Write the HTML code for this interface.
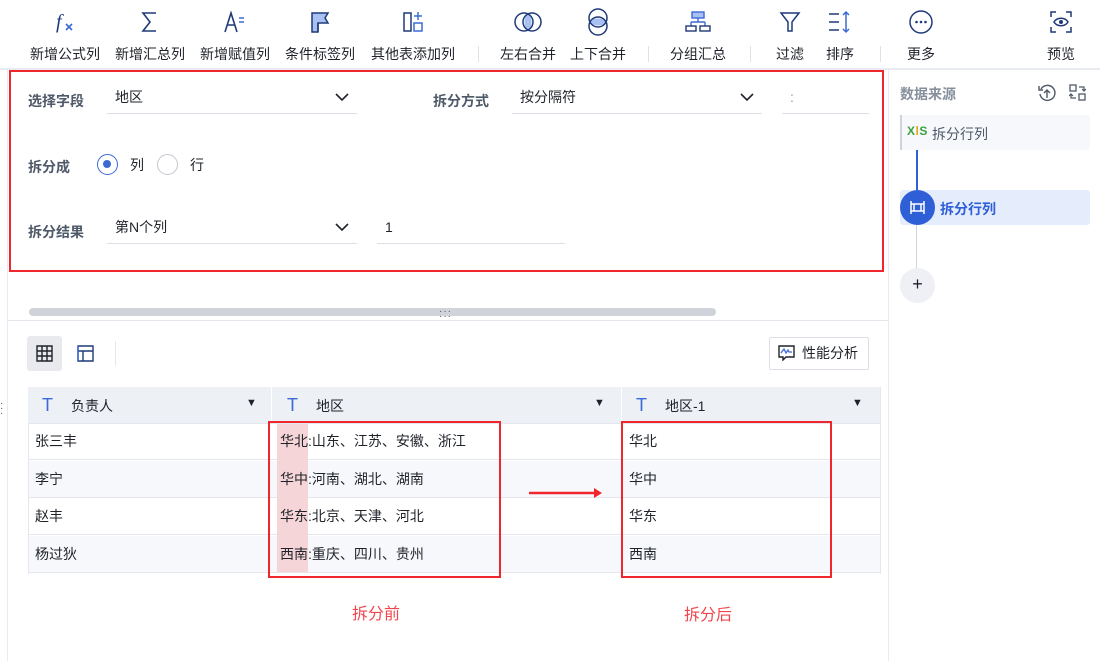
<!DOCTYPE html>
<html><head><meta charset="utf-8"><style>
*{margin:0;padding:0;box-sizing:border-box}
body{width:1100px;height:661px;background:#fff;font-family:"Liberation Sans","Noto Sans CJK SC",sans-serif;color:#1f2329;position:relative;overflow:hidden;font-size:14px}
.a{position:absolute}
.tb{position:absolute;top:0;text-align:center;font-size:14px;color:#1f2329}
.tb svg{display:block;margin:0 auto}
.tb span{position:absolute;top:44px;left:50%;transform:translateX(-50%);white-space:nowrap}
.sep{position:absolute;top:46px;width:1px;height:16px;background:#dfe1e5}
.lbl{position:absolute;font-size:14px;color:#4e5969;font-weight:bold}
.sel{position:absolute;border-bottom:1px solid #dcdfe6;height:30px;font-size:14px;padding-left:8px;line-height:26px}
.chev{position:absolute;right:8px;top:8px}
.th{position:absolute;top:387px;height:36px;background:#edf0f5;line-height:36px;font-size:14px}
.cell{position:absolute;font-size:14px;line-height:37px;padding-left:8px}
.row{position:absolute;left:28px;width:852px;height:37px;border-bottom:1px solid #e4e7ee}
</style></head><body>
<!-- toolbar -->
<div class="tb" style="left:28px;width:74px"><svg width="24" height="24" viewBox="0 0 24 24" style="margin-top:10px"><text x="3" y="18" font-family="Liberation Serif" font-style="italic" font-size="20" fill="#1f3a78">f</text><path d="M13 14l6 6M19 14l-6 6" stroke="#3b6ad6" stroke-width="1.6"/></svg><span>新增公式列</span></div>
<div class="tb" style="left:113px;width:74px"><svg width="24" height="24" viewBox="0 0 24 24" style="margin-top:10px"><path d="M18 3H5l7 9-7 9h13" fill="none" stroke="#1f3a78" stroke-width="1.6"/></svg><span>新增汇总列</span></div>
<div class="tb" style="left:198px;width:74px"><svg width="24" height="24" viewBox="0 0 24 24" style="margin-top:10px"><path d="M2 22L8 3l6 19M4.5 15h7" fill="none" stroke="#1f3a78" stroke-width="1.6"/><path d="M16 8h5M16 12h5" stroke="#3b6ad6" stroke-width="1.4"/></svg><span>新增赋值列</span></div>
<div class="tb" style="left:283px;width:74px"><svg width="24" height="24" viewBox="0 0 24 24" style="margin-top:10px"><path d="M4 3h16l-3 5 3 5H10v9H4z" fill="#a9c1f2" stroke="#1f3a78" stroke-width="1.5"/><path d="M10 13v9" stroke="#1f3a78" stroke-width="1.5"/></svg><span>条件标签列</span></div>
<div class="tb" style="left:368px;width:90px"><svg width="24" height="24" viewBox="0 0 24 24" style="margin-top:10px"><rect x="3" y="3" width="7" height="18" fill="none" stroke="#1f3a78" stroke-width="1.5"/><rect x="13" y="13" width="8" height="8" fill="none" stroke="#3b6ad6" stroke-width="1.5"/><path d="M17 2v8M13 6h8" stroke="#3b6ad6" stroke-width="1.5"/></svg><span>其他表添加列</span></div>
<div class="sep" style="left:478px"></div>
<div class="tb" style="left:498px;width:60px"><svg width="30" height="24" viewBox="0 0 30 24" style="margin-top:10px"><ellipse cx="15" cy="12" rx="3.5" ry="8" fill="#a9c1f2"/><circle cx="11" cy="12" r="9" fill="none" stroke="#1f3a78" stroke-width="1.5"/><circle cx="19" cy="12" r="9" fill="none" stroke="#1f3a78" stroke-width="1.5"/></svg><span>左右合并</span></div>
<div class="tb" style="left:568px;width:60px"><svg width="24" height="30" viewBox="0 0 24 30" style="margin-top:7px"><ellipse cx="12" cy="15" rx="8" ry="3.5" fill="#a9c1f2"/><circle cx="12" cy="11" r="9" fill="none" stroke="#1f3a78" stroke-width="1.5"/><circle cx="12" cy="19" r="9" fill="none" stroke="#1f3a78" stroke-width="1.5"/></svg><span>上下合并</span></div>
<div class="sep" style="left:648px"></div>
<div class="tb" style="left:668px;width:60px"><svg width="26" height="24" viewBox="0 0 26 24" style="margin-top:10px"><rect x="7" y="2" width="12" height="6" fill="#a9c1f2" stroke="#3b6ad6" stroke-width="1.4"/><path d="M13 8v4M6 12h14M6 12v4M20 12v4" stroke="#3b6ad6" stroke-width="1.4" fill="none"/><rect x="1" y="16" width="10" height="5" fill="none" stroke="#1f3a78" stroke-width="1.4"/><rect x="15" y="16" width="10" height="5" fill="none" stroke="#1f3a78" stroke-width="1.4"/></svg><span>分组汇总</span></div>
<div class="sep" style="left:750px"></div>
<div class="tb" style="left:770px;width:40px"><svg width="24" height="24" viewBox="0 0 24 24" style="margin-top:10px"><path d="M3 3h18l-7 9v9h-4v-9z" fill="none" stroke="#1f3a78" stroke-width="1.5"/></svg><span>过滤</span></div>
<div class="tb" style="left:820px;width:40px"><svg width="26" height="24" viewBox="0 0 26 24" style="margin-top:10px"><path d="M2 4h10M2 12h10M2 20h10" stroke="#1f3a78" stroke-width="1.5"/><path d="M19 2v20M16 5l3-3 3 3M16 19l3 3 3-3" stroke="#3b6ad6" stroke-width="1.5" fill="none"/></svg><span>排序</span></div>
<div class="sep" style="left:880px"></div>
<div class="tb" style="left:901px;width:40px"><svg width="26" height="26" viewBox="0 0 26 26" style="margin-top:9px"><circle cx="13" cy="13" r="11" fill="none" stroke="#1f3a78" stroke-width="1.5"/><circle cx="8.5" cy="13" r="1.3" fill="#1f3a78"/><circle cx="13" cy="13" r="1.3" fill="#1f3a78"/><circle cx="17.5" cy="13" r="1.3" fill="#1f3a78"/></svg><span>更多</span></div>
<div class="tb" style="left:1041px;width:40px"><svg width="24" height="24" viewBox="0 0 24 24" style="margin-top:10px"><path d="M2 7V2h5M17 2h5v5M22 17v5h-5M7 22H2v-5" fill="none" stroke="#1f3a78" stroke-width="1.5"/><path d="M5 12c3-5 11-5 14 0-3 5-11 5-14 0z" fill="none" stroke="#1f3a78" stroke-width="1.5"/><circle cx="12" cy="12" r="2" fill="#1f3a78"/></svg><span>预览</span></div>
<div class="a" style="left:0;top:68px;width:1100px;height:2px;background:#e8ebf0"></div>
<div class="a" style="left:7px;top:70px;width:1px;height:591px;background:#e8ebf0"></div>
<div class="a" style="left:888px;top:70px;width:1px;height:591px;background:#e8ebf0"></div>

<!-- config box -->
<div class="a" style="left:9px;top:70px;width:875px;height:202px;border:2px solid #f0262e"></div>
<div class="lbl" style="left:28px;top:91px">选择字段</div>
<div class="sel" style="left:107px;top:84px;width:250px">地区<svg class="chev" width="14" height="10" viewBox="0 0 14 10"><path d="M1 2l6 6 6-6" fill="none" stroke="#1f2329" stroke-width="1.6"/></svg></div>
<div class="lbl" style="left:433px;top:91px">拆分方式</div>
<div class="sel" style="left:512px;top:84px;width:250px">按分隔符<svg class="chev" width="14" height="10" viewBox="0 0 14 10"><path d="M1 2l6 6 6-6" fill="none" stroke="#1f2329" stroke-width="1.6"/></svg></div>
<div class="sel" style="left:782px;top:84px;width:87px;color:#999">:</div>
<div class="lbl" style="left:28px;top:157px">拆分成</div>
<div class="a" style="left:97px;top:154px;width:21px;height:21px;border:1.5px solid #3b6ad6;border-radius:50%"><div style="position:absolute;left:5px;top:5px;width:8px;height:8px;border-radius:50%;background:#3b6ad6"></div></div>
<div class="a" style="left:130px;top:155px">列</div>
<div class="a" style="left:157px;top:154px;width:21px;height:21px;border:1.5px solid #c3c7cf;border-radius:50%"></div>
<div class="a" style="left:190px;top:155px">行</div>
<div class="lbl" style="left:28px;top:222px">拆分结果</div>
<div class="sel" style="left:107px;top:214px;width:250px">第N个列<svg class="chev" width="14" height="10" viewBox="0 0 14 10"><path d="M1 2l6 6 6-6" fill="none" stroke="#1f2329" stroke-width="1.6"/></svg></div>
<div class="sel" style="left:377px;top:214px;width:188px">1</div>

<!-- scrollbar & divider -->
<div class="a" style="left:29px;top:308px;width:687px;height:8px;border-radius:4px;background:#d0d3da"></div>
<div class="a" style="left:8px;top:320px;width:880px;height:1px;background:#e4e7ee"></div>
<div class="a" style="left:439px;top:309px;font-size:10px;color:#555;letter-spacing:1px;line-height:5px">···<br>···</div>
<div class="a" style="left:0;top:401px;font-size:10px;line-height:5px;color:#555">·<br>·<br>·</div>

<!-- view toggles -->
<div class="a" style="left:27px;top:336px;width:35px;height:35px;background:#e8eaee;border-radius:3px"></div>
<svg class="a" style="left:36px;top:345px" width="17" height="17" viewBox="0 0 17 17"><path d="M1 1h15v15H1zM6 1v15M11 1v15M1 6h15M1 11h15" fill="none" stroke="#1f2329" stroke-width="1.4"/></svg>
<svg class="a" style="left:77px;top:345px" width="17" height="17" viewBox="0 0 17 17"><path d="M1 1h15v15H1zM1 6h15M6 6v10" fill="none" stroke="#1f3a78" stroke-width="1.4"/><path d="M1 1v15" stroke="#3b6ad6" stroke-width="1.4"/></svg>
<div class="a" style="left:115px;top:341px;width:1px;height:25px;background:#e4e7ee"></div>
<div class="a" style="left:769px;top:337px;width:100px;height:33px;border:1px solid #dcdfe6;border-radius:2px;font-size:14px;line-height:31px;padding-left:32px">性能分析</div>
<svg class="a" style="left:778px;top:345px" width="17" height="16" viewBox="0 0 17 16"><path d="M1 1h15v11H8l-3 3v-3H1z" fill="none" stroke="#1f2329" stroke-width="1.4"/><path d="M3 8l3-4 2 4 2-3 1 2h3" fill="none" stroke="#3b6ad6" stroke-width="1.3"/></svg>

<!-- table -->
<div class="th" style="left:28px;width:243px"></div>
<div class="th" style="left:272px;width:349px"></div>
<div class="th" style="left:622px;width:258px"></div>
<div class="row" style="top:423px;background:#fff"></div>
<div class="row" style="top:461px;background:#f7f8fc"></div>
<div class="row" style="top:498px;background:#fff"></div>
<div class="row" style="top:536px;background:#f7f8fc"></div>
<div class="a" style="left:28px;top:423px;width:1px;height:151px;background:#e4e7ee"></div>
<div class="a" style="left:880px;top:387px;width:1px;height:187px;background:#e4e7ee"></div>
<div class="a" style="left:28px;top:423px;width:852px;height:1px;background:#e4e7ee"></div>
<div class="a" style="left:277px;top:424px;width:31px;height:148px;background:#f6d5d8"></div>
<div class="a" style="left:42px;top:396px;color:#3b6ad6;font-size:18px;line-height:18px">T</div>
<div class="a" style="left:71px;top:396px">负责人</div>
<div class="a" style="left:246px;top:397px;font-size:11px">▼</div>
<div class="a" style="left:287px;top:396px;color:#3b6ad6;font-size:18px;line-height:18px">T</div>
<div class="a" style="left:316px;top:396px">地区</div>
<div class="a" style="left:594px;top:397px;font-size:11px">▼</div>
<div class="a" style="left:636px;top:396px;color:#3b6ad6;font-size:18px;line-height:18px">T</div>
<div class="a" style="left:665px;top:396px">地区-1</div>
<div class="a" style="left:852px;top:397px;font-size:11px">▼</div>
<div class="cell" style="left:27px;top:423px">张三丰</div>
<div class="cell" style="left:27px;top:461px">李宁</div>
<div class="cell" style="left:27px;top:498px">赵丰</div>
<div class="cell" style="left:27px;top:536px">杨过狄</div>
<div class="cell" style="left:272px;top:423px">华北:山东、江苏、安徽、浙江</div>
<div class="cell" style="left:272px;top:461px">华中:河南、湖北、湖南</div>
<div class="cell" style="left:272px;top:498px">华东:北京、天津、河北</div>
<div class="cell" style="left:272px;top:536px">西南:重庆、四川、贵州</div>
<div class="cell" style="left:621px;top:423px">华北</div>
<div class="cell" style="left:621px;top:461px">华中</div>
<div class="cell" style="left:621px;top:498px">华东</div>
<div class="cell" style="left:621px;top:536px">西南</div>
<div class="a" style="left:268px;top:421px;width:233px;height:157px;border:2px solid #f0262e"></div>
<div class="a" style="left:621px;top:421px;width:211px;height:157px;border:2px solid #f0262e"></div>
<svg class="a" style="left:528px;top:487px" width="75" height="12" viewBox="0 0 75 12"><path d="M1 6h66" stroke="#f0262e" stroke-width="2.5"/><path d="M66 1l8 5-8 5z" fill="#f0262e"/></svg>
<div class="a" style="left:352px;top:600px;color:#f0474e;font-size:16px">拆分前</div>
<div class="a" style="left:684px;top:601px;color:#f0474e;font-size:16px">拆分后</div>

<!-- right panel -->
<div class="a" style="left:900px;top:84px;color:#86909c;font-size:14px;font-weight:bold">数据来源</div>
<svg class="a" style="left:1038px;top:84px" width="18" height="18" viewBox="0 0 18 18"><path d="M3 5a7.5 7.5 0 1 1-1 5" fill="none" stroke="#4e5969" stroke-width="1.4"/><path d="M1 2v4h4" fill="none" stroke="#4e5969" stroke-width="1.4"/><path d="M9 14V6M6 9l3-3 3 3" fill="none" stroke="#4e5969" stroke-width="1.4"/></svg>
<svg class="a" style="left:1069px;top:84px" width="17" height="17" viewBox="0 0 17 17"><rect x="1" y="1" width="6" height="6" fill="none" stroke="#4e5969" stroke-width="1.3"/><rect x="10" y="10" width="6" height="6" fill="none" stroke="#4e5969" stroke-width="1.3"/><path d="M10 3h5v4M13 5l2 2 2-2M7 14H2v-4M4 12l-2-2-2 2" fill="none" stroke="#4e5969" stroke-width="1.2"/></svg>
<div class="a" style="left:900px;top:115px;width:190px;height:35px;background:#f7f8fb;border-left:2px solid #d0d3da;border-radius:0 3px 3px 0"></div>
<div class="a" style="left:907px;top:124px;font-size:12px;font-weight:bold;color:#3aa140;letter-spacing:0.5px">X<span style="color:#e6a817">l</span>S</div>
<div class="a" style="left:932px;top:124px;color:#4e5969">拆分行列</div>
<div class="a" style="left:916px;top:150px;width:2px;height:40px;background:#2f5fd6"></div>
<div class="a" style="left:916px;top:224px;width:1px;height:46px;background:#d0d3da"></div>
<div class="a" style="left:900px;top:190px;width:190px;height:35px;background:#e5edfd;border-radius:3px"></div>
<div class="a" style="left:900px;top:190px;width:35px;height:35px;background:#2f5fd6;border-radius:50%"></div>
<svg class="a" style="left:909px;top:199px" width="17" height="17" viewBox="0 0 17 17"><path d="M2 2v13M15 2v13M2 5h13M2 12h13M5 5v7M12 5v7" fill="none" stroke="#fff" stroke-width="1.5"/></svg>
<div class="a" style="left:940px;top:199px;color:#2f5fd6;font-weight:bold">拆分行列</div>
<div class="a" style="left:900px;top:268px;width:35px;height:35px;background:#eef0f5;border-radius:50%;text-align:center;line-height:33px;font-size:18px">+</div>
</body></html>
